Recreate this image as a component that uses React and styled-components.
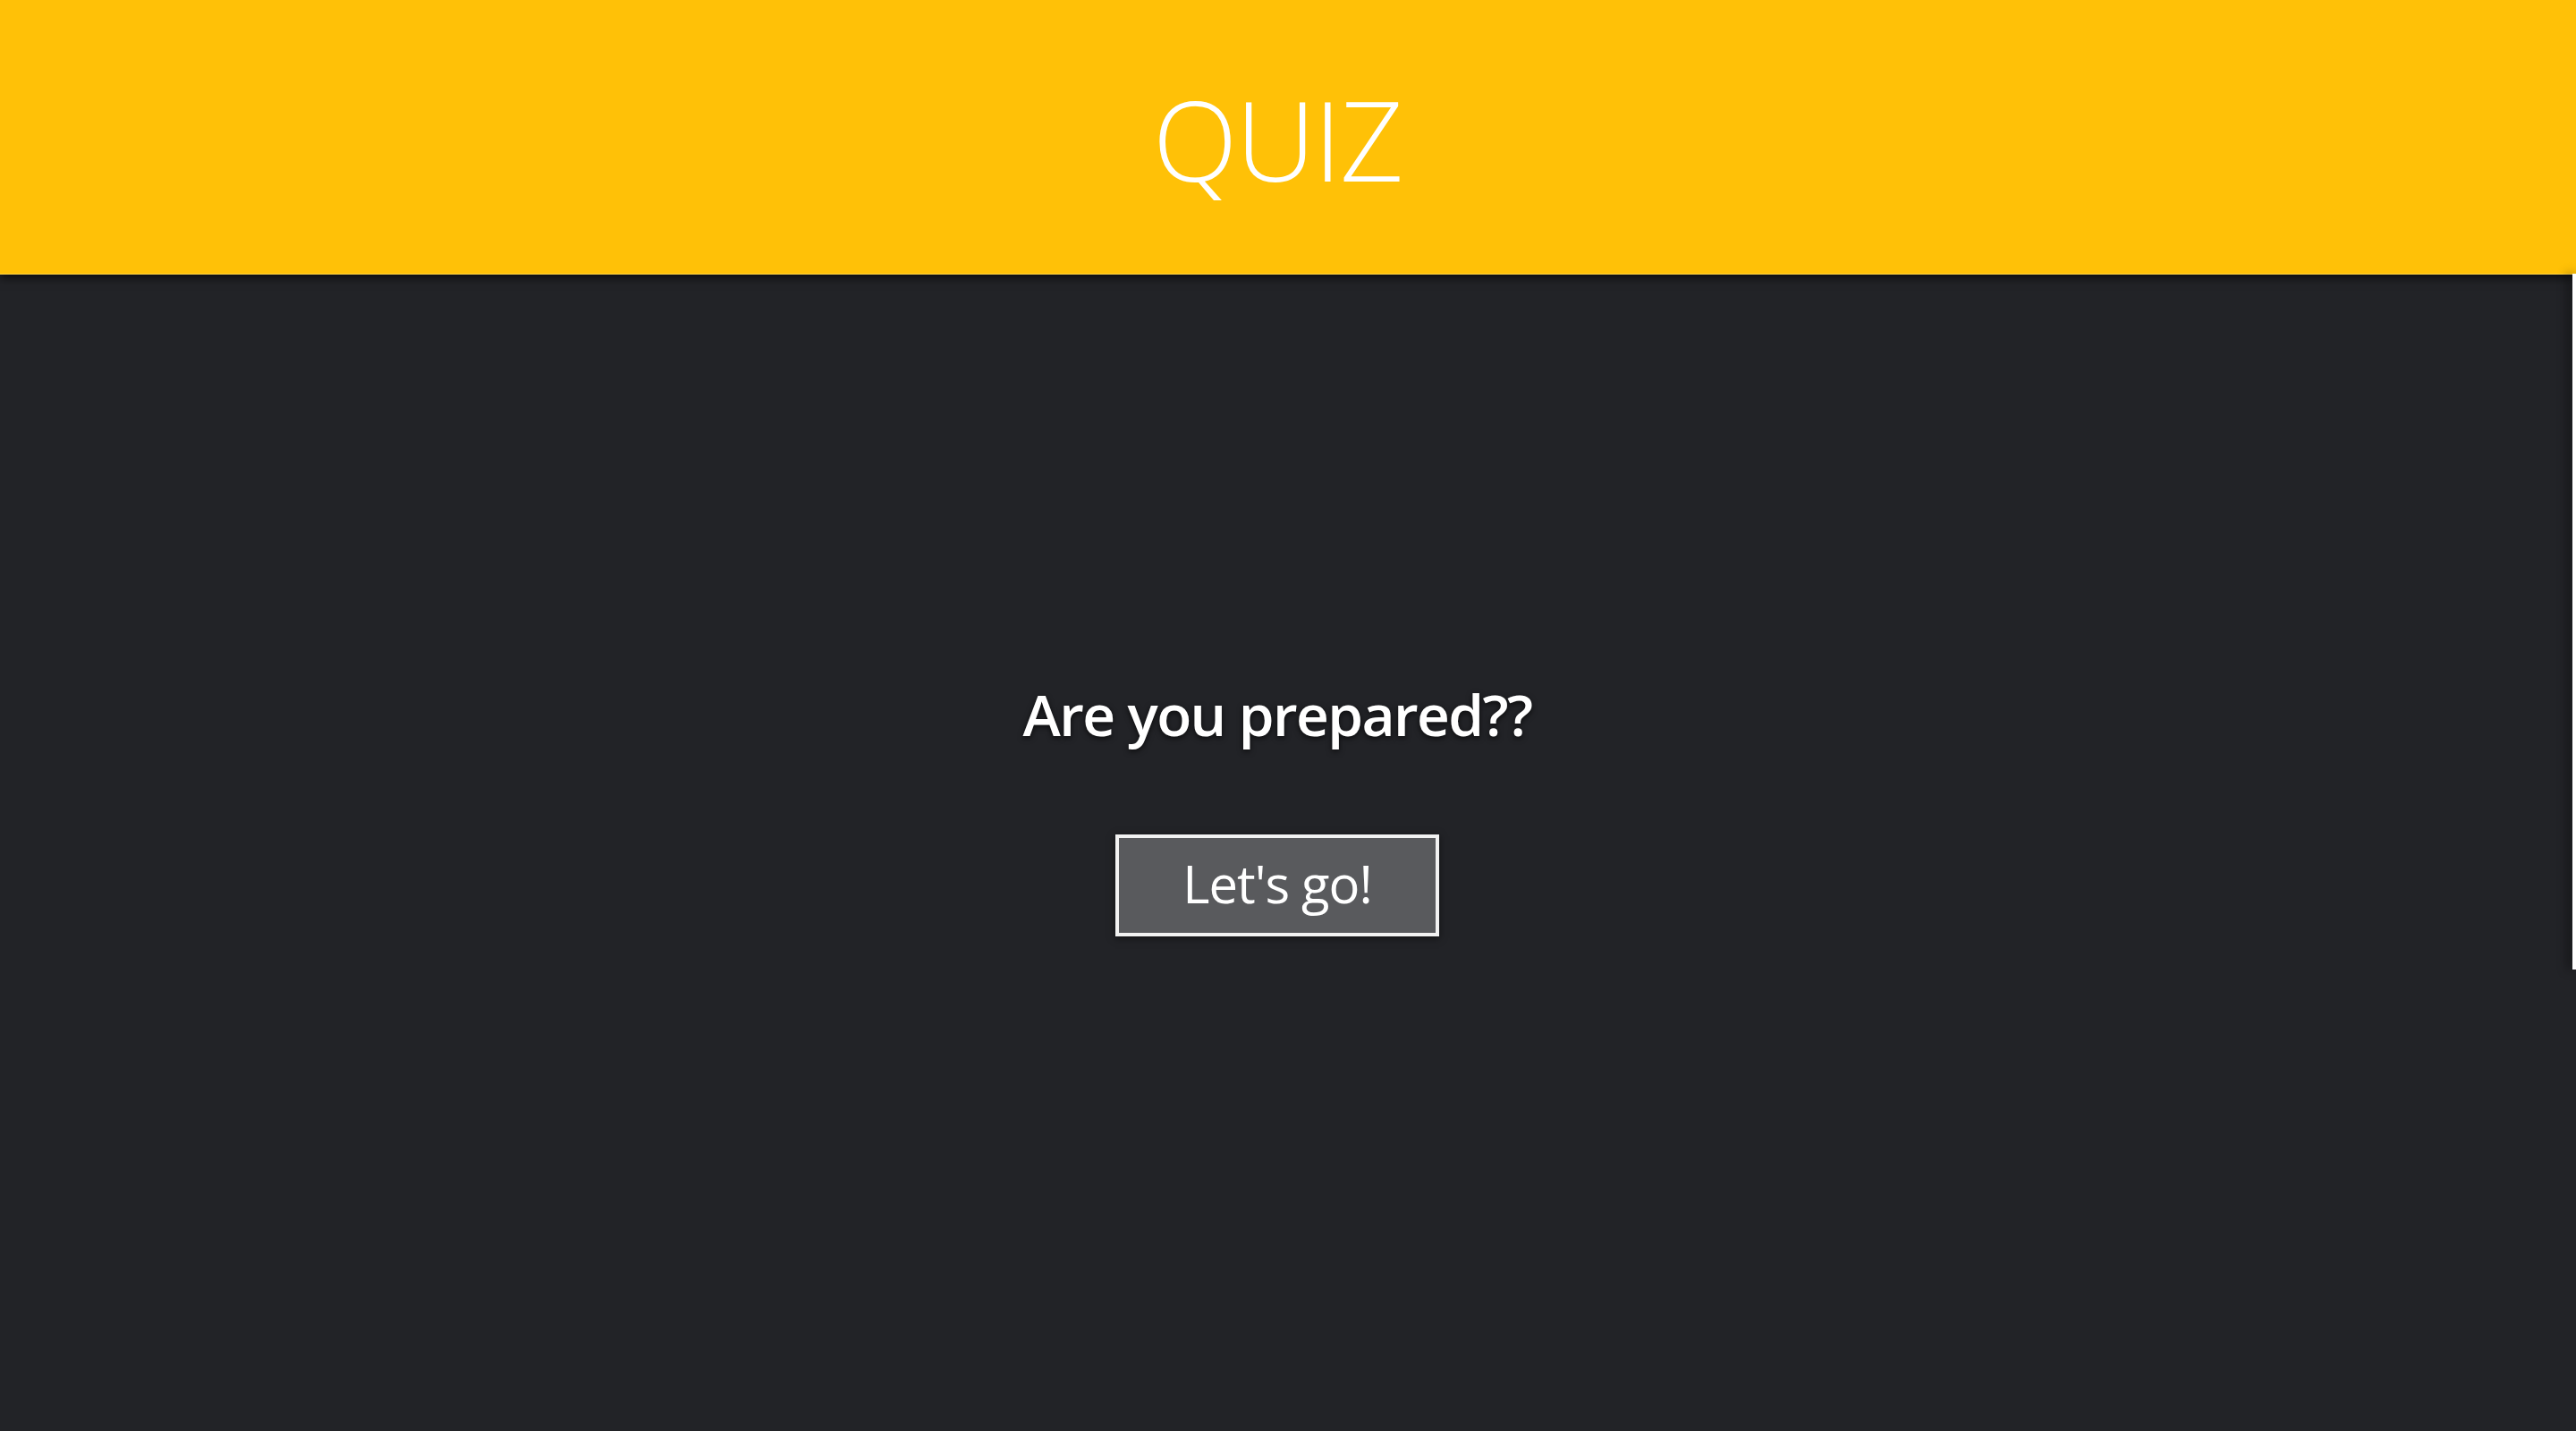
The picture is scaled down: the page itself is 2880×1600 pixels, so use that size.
import React from 'react';
import styled, { createGlobalStyle } from 'styled-components';

const GlobalStyle = createGlobalStyle`
  html, body {
    margin: 0;
    padding: 0;
    background: #222327;
  }
  #root {
    min-height: 100vh;
  }
`;

const Page = styled.div`
  position: relative;
  display: flex;
  flex-direction: column;
  min-height: 100vh;
  background: #222327;
  font-family: "Open Sans", "Noto Sans", sans-serif;
  overflow: hidden;
`;

const Header = styled.header`
  position: relative;
  z-index: 2;
  display: flex;
  align-items: center;
  justify-content: center;
  height: 306px;
  padding-right: 24px;
  background: #ffc107;
  border-bottom: 1px solid #ffd54a;
  box-shadow: 0 3px 10px rgba(0, 0, 0, 0.75);
`;

const Title = styled.h1`
  margin: 0;
  padding-top: 4px;
  font-family: "Open Sans", sans-serif;
  font-weight: 300;
  font-size: 124px;
  letter-spacing: -2px;
  color: #ffffff;
  line-height: 1;
`;

const Main = styled.main`
  flex: 1;
  display: flex;
  flex-direction: column;
  align-items: center;
  padding-top: 460px;
  padding-right: 24px;
  gap: 102px;
  background: #222327;
`;

const Question = styled.h2`
  margin: 0;
  font-family: "Open Sans", sans-serif;
  font-weight: 600;
  font-size: 64px;
  letter-spacing: -1.6px;
  line-height: 1;
  color: #ffffff;
  text-shadow: 0 2px 6px rgba(0, 0, 0, 0.7);
`;

const StartButton = styled.button`
  width: 362px;
  height: 114px;
  display: flex;
  align-items: center;
  justify-content: center;
  background: #595a5d;
  border: 4px solid #f2f2f2;
  color: #ffffff;
  font-family: "Open Sans", sans-serif;
  font-weight: 500;
  font-size: 58px;
  letter-spacing: -1px;
  padding: 0 0 6px;
  cursor: pointer;
  box-shadow: 0 2px 8px rgba(0, 0, 0, 0.5);
`;

const EdgeBar = styled.div`
  position: absolute;
  top: 306px;
  right: 0;
  width: 4px;
  height: 778px;
  background: #ffffff;
  box-shadow: -4px 0 12px rgba(0, 0, 0, 0.8);
  z-index: 3;
`;

export default function App() {
  return (
    <Page>
      <GlobalStyle />
      <Header>
        <Title>QUIZ</Title>
      </Header>
      <Main>
        <Question>Are you prepared??</Question>
        <StartButton>Let's go!</StartButton>
      </Main>
      <EdgeBar />
    </Page>
  );
}
